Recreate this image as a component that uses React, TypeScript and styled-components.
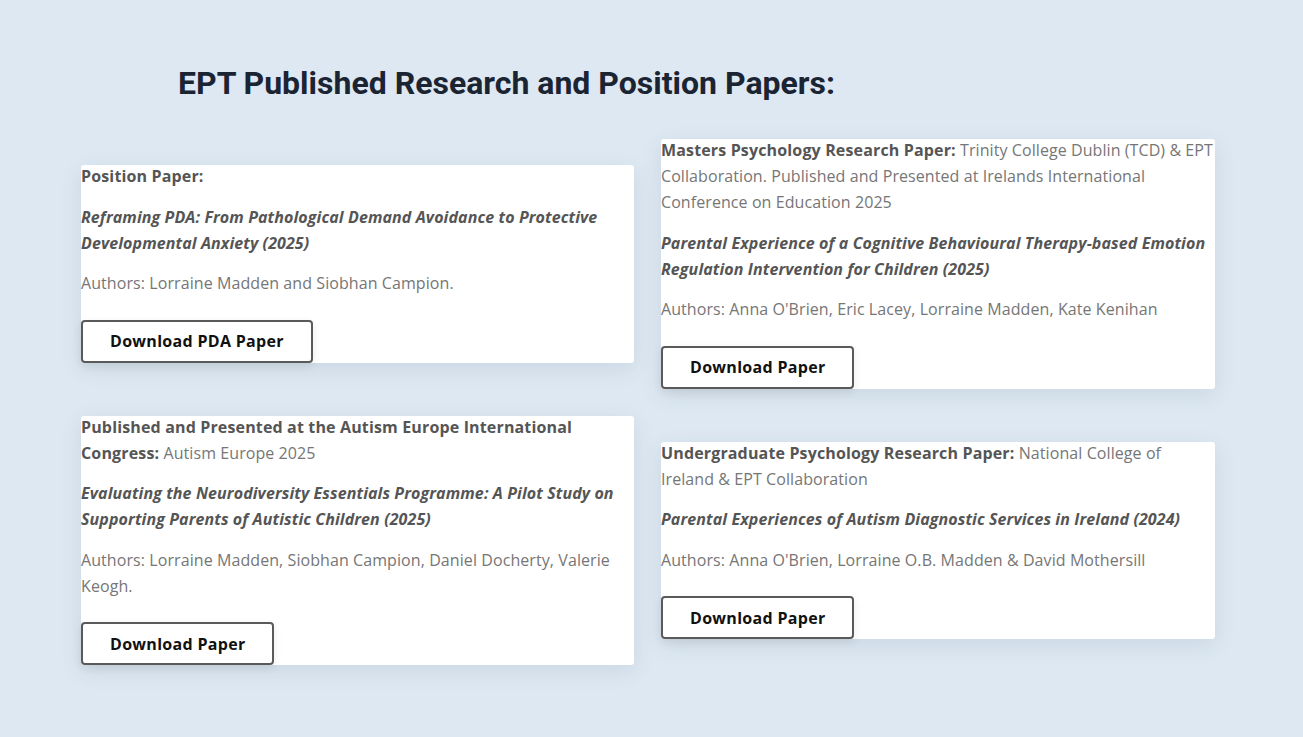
import React from "react";
import styled, { createGlobalStyle } from "styled-components";

const Global = createGlobalStyle`
  html, body { margin: 0; padding: 0; }
  body {
    background: #dde8f2;
    font-family: "Open Sans", "Noto Sans", sans-serif;
  }
`;

const Page = styled.main`
  padding: 63px 0 60px 81px;
  width: 1134px;
`;

const Heading = styled.h1`
  margin: 0 0 36px 97px;
  font-family: "Roboto", "Liberation Sans", sans-serif;
  font-weight: 700;
  font-size: 32px;
  line-height: 40px;
  letter-spacing: 0;
  color: #1b2433;
`;

const Grid = styled.div`
  display: grid;
  grid-template-columns: 553px 554px;
  column-gap: 27px;
  row-gap: 27px;
  align-items: center;
`;

const Card = styled.article`
  background: #ffffff;
  border-radius: 3px;
  box-shadow: 0 6px 22px rgba(40, 70, 100, 0.1);
  display: flex;
  flex-direction: column;
  align-items: flex-start;

  & > p:first-child {
    margin-top: -2px;
  }
`;

const Para = styled.p<{ $gap?: number }>`
  margin: 0 0 ${(p) => p.$gap ?? 14.5}px;
  font-size: 16px;
  line-height: 26px;
  letter-spacing: 0.08px;
  color: #767676;
`;

const Label = styled.strong`
  font-weight: 700;
  color: #555555;
  letter-spacing: 0.15px;
`;

const Title = styled.em`
  font-weight: 700;
  font-style: italic;
  color: #555555;
  letter-spacing: 0.1px;
`;

const Button = styled.a`
  box-sizing: border-box;
  height: 43px;
  display: inline-flex;
  align-items: center;
  padding: 0 27px;
  border: 2px solid #5a5a5a;
  border-radius: 4px;
  background: #fff;
  color: #111;
  font-size: 16px;
  font-weight: 700;
  letter-spacing: 0.3px;
  text-decoration: none;
  box-shadow: 0 3px 10px rgba(0, 0, 0, 0.08);
`;

type Paper = {
  label: string;
  source?: string;
  title: string;
  authors: string;
  button: string;
};

const papers: Paper[] = [
  {
    label: "Position Paper:",
    title:
      "Reframing PDA: From Pathological Demand Avoidance to Protective Developmental Anxiety (2025)",
    authors: "Authors: Lorraine Madden and Siobhan Campion.",
    button: "Download PDA Paper",
  },
  {
    label: "Masters Psychology Research Paper:",
    source:
      " Trinity College Dublin (TCD) & EPT Collaboration. Published and Presented at Irelands International Conference on Education 2025",
    title:
      "Parental Experience of a Cognitive Behavioural Therapy-based Emotion Regulation Intervention for Children (2025)",
    authors: "Authors: Anna O'Brien, Eric Lacey, Lorraine Madden, Kate Kenihan",
    button: "Download Paper",
  },
  {
    label: "Published and Presented at the Autism Europe International Congress:",
    source: " Autism Europe 2025",
    title:
      "Evaluating the Neurodiversity Essentials Programme: A Pilot Study on Supporting Parents of Autistic Children (2025)",
    authors:
      "Authors: Lorraine Madden, Siobhan Campion, Daniel Docherty, Valerie Keogh.",
    button: "Download Paper",
  },
  {
    label: "Undergraduate Psychology Research Paper:",
    source: " National College of Ireland & EPT Collaboration",
    title: "Parental Experiences of Autism Diagnostic Services in Ireland (2024)",
    authors: "Authors: Anna O'Brien, Lorraine O.B. Madden & David Mothersill",
    button: "Download Paper",
  },
];

export default function App() {
  return (
    <>
      <Global />
      <Page>
        <Heading>EPT Published Research and Position Papers:</Heading>
        <Grid>
          {papers.map((p) => (
            <Card key={p.title}>
              <Para>
                <Label>{p.label}</Label>
                {p.source}
              </Para>
              <Para>
                <Title>{p.title}</Title>
              </Para>
              <Para $gap={23.5}>{p.authors}</Para>
              <Button href="#">{p.button}</Button>
            </Card>
          ))}
        </Grid>
      </Page>
    </>
  );
}
